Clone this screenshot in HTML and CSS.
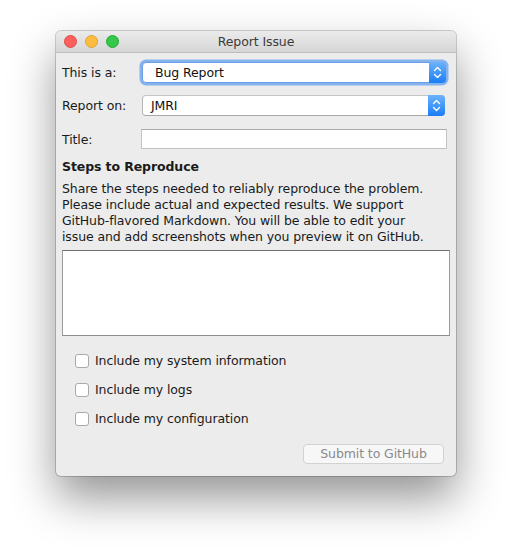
FILE: index.html
```html
<!DOCTYPE html>
<html>
<head>
<meta charset="utf-8">
<link rel="stylesheet" href="styles.css">
</head>
<body>
<div class="window">
  <div class="titlebar">
    <div class="lights">
      <span class="light red"></span>
      <span class="light yellow"></span>
      <span class="light green"></span>
    </div>
    <div class="title">Report Issue</div>
  </div>
  <div class="content">
    <div class="row row1">
      <div class="label">This is a:</div>
      <div class="combo focused">
        <span class="combo-text bug">Bug Report</span>
        <span class="combo-btn">
          <svg width="9" height="13" viewBox="0 0 9 13"><path d="M1.5 4.5 L4.5 1.5 L7.5 4.5 M1.5 8.5 L4.5 11.5 L7.5 8.5" fill="none" stroke="#fff" stroke-width="1.4" stroke-linecap="round" stroke-linejoin="round"/></svg>
        </span>
      </div>
    </div>
    <div class="row row2">
      <div class="label">Report on:</div>
      <div class="combo">
        <span class="combo-text">JMRI</span>
        <span class="combo-btn">
          <svg width="9" height="13" viewBox="0 0 9 13"><path d="M1.5 4.5 L4.5 1.5 L7.5 4.5 M1.5 8.5 L4.5 11.5 L7.5 8.5" fill="none" stroke="#fff" stroke-width="1.4" stroke-linecap="round" stroke-linejoin="round"/></svg>
        </span>
      </div>
    </div>
    <div class="row row3">
      <div class="label label-title">Title:</div>
      <div class="textfield"></div>
    </div>
    <div class="heading">Steps to Reproduce</div>
    <p class="desc">Share the steps needed to reliably reproduce the problem.<br>Please include actual and expected results. We support<br>GitHub-flavored Markdown. You will be able to edit your<br>issue and add screenshots when you preview it on GitHub.</p>
    <div class="textarea"></div>
    <div class="checks">
      <div class="check"><span class="box"></span><span>Include my system information</span></div>
      <div class="check"><span class="box"></span><span>Include my logs</span></div>
      <div class="check"><span class="box"></span><span>Include my configuration</span></div>
    </div>
    <div class="actions">
      <div class="button">Submit to GitHub</div>
    </div>
  </div>
</div>
</body>
</html>
```
FILE: styles.css
```css
html, body {
  margin: 0;
  padding: 0;
  background: #ffffff;
}
body {
  width: 512px;
  height: 556px;
  overflow: hidden;
  font-family: "DejaVu Sans", "Liberation Sans", sans-serif;
  font-size: 12.5px;
  letter-spacing: -0.1px;
  color: #1a1a1a;
}
.window {
  margin: 31px 0 0 56px;
  width: 400px;
  height: 445px;
  background: #ececec;
  border-radius: 5px;
  box-shadow: 0 0 0 1px rgba(0,0,0,0.18), 0 22px 45px rgba(0,0,0,0.42);
  overflow: hidden;
}
.titlebar {
  height: 21px;
  border-bottom: 1px solid #bdbdbd;
  background: linear-gradient(#ebebeb, #d6d6d6);
  display: flex;
  align-items: center;
  position: relative;
}
.lights {
  display: flex;
  gap: 8px;
  padding-left: 8px;
}
.light {
  width: 11px;
  height: 11px;
  border-radius: 50%;
  border: 0.5px solid rgba(0,0,0,0.15);
}
.red { background: #fc605c; border-color: #de4a47; }
.yellow { background: #fdbc40; border-color: #dea236; }
.green { background: #34c84a; border-color: #27aa35; }
.title {
  position: absolute;
  left: 0;
  right: 0;
  top: 0;
  line-height: 22px;
  text-align: center;
  color: #3c3c3c;
}
.content {
  padding: 9px 6px 0 6px;
  display: flex;
  flex-direction: column;
}
.row {
  display: flex;
  align-items: center;
}
.row1 { height: 21px; padding-right: 4px; }
.row2 { height: 21px; margin-top: 12px; padding-right: 5px; }
.row3 { height: 20px; margin-top: 13px; padding-right: 3px; }
.label {
  width: 80px;
  flex: none;
}
.label-title { width: 79px; }
.combo {
  flex: 1;
  height: 21px;
  box-sizing: border-box;
  background: #fff;
  border: 1px solid #b8b8b8;
  border-top-color: #c4c4c4;
  border-bottom-color: #a8a8a8;
  border-radius: 4px;
  display: flex;
  align-items: center;
  position: relative;
}
.combo.focused {
  box-shadow: 0 0 0 2.5px #85b3ee;
  border-color: #6a9fe6;
}
.combo-text {
  flex: 1;
  padding-left: 8px;
  color: #111;
}
.combo-text.bug { padding-left: 12px; }
.combo-btn {
  width: 17px;
  align-self: stretch;
  margin: -1px -1px -1px 0;
  border-radius: 0 4px 4px 0;
  background: linear-gradient(#6cb2fb, #1a7ef6);
  display: flex;
  align-items: center;
  justify-content: center;
}
.textfield {
  flex: 1;
  height: 20px;
  box-sizing: border-box;
  background: #fff;
  border: 1px solid #c3c3c3;
  border-top-color: #a9a9a9;
}
.heading {
  margin-top: 9px;
  line-height: 17px;
  font-weight: bold;
}
.desc {
  margin: 6px 0 0 0;
  line-height: 16px;
}
.textarea {
  margin-top: 5px;
  height: 86px;
  box-sizing: border-box;
  background: #fff;
  border: 1px solid #9c9c9c;
  border-top-color: #6d6d6d;
  border-bottom-color: #8e8e8e;
}
.checks {
  margin-top: 10px;
  padding-left: 13px;
  display: flex;
  flex-direction: column;
}
.check {
  height: 29px;
  display: flex;
  align-items: center;
}
.box {
  width: 14px;
  height: 14px;
  box-sizing: border-box;
  background: #fff;
  border: 1px solid #a9a9a9;
  border-radius: 3px;
  margin-right: 6px;
}
.actions {
  margin-top: 11px;
  display: flex;
  justify-content: flex-end;
  padding-right: 6px;
}
.button {
  width: 141px;
  height: 20px;
  box-sizing: border-box;
  background: #f7f7f7;
  border: 1px solid #d2d2d2;
  border-radius: 4px;
  color: #8a8a8a;
  text-align: center;
  line-height: 18px;
}
```
